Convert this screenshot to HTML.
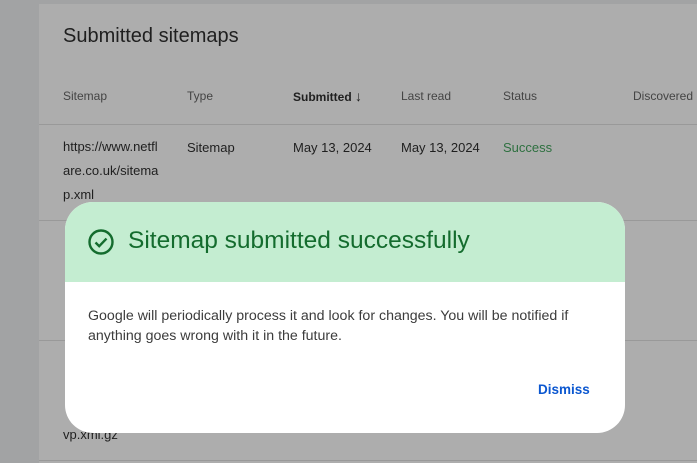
<!DOCTYPE html>
<html><head><style>
html,body{margin:0;width:697px;height:463px;overflow:hidden}
body{background:#a2a3a4;font-family:"Liberation Sans",sans-serif;position:relative}
.card{position:absolute;left:39px;top:4px;width:660px;height:459px;background:#adadad;}
.t{position:absolute;color:#1f1f1f;font-size:13px;white-space:nowrap}
.h{color:#444;font-size:12px}
.line{position:absolute;left:39px;width:660px;height:1px;background:#999}
.dlg{position:absolute;left:65px;top:202px;width:560px;height:231px;background:#fff;border-radius:28px;overflow:hidden}
.hd{height:80px;background:#c4edd1;position:relative}
</style></head><body>
<div class="card"></div>
<div class="t" style="left:63px;top:25px;font-size:20px;color:#1f1f1f">Submitted sitemaps</div>
<div class="t h" style="left:63px;top:89px">Sitemap</div>
<div class="t h" style="left:187px;top:89px">Type</div>
<div class="t h" style="left:293px;top:88px;color:#1f1f1f;font-weight:bold">Submitted <span style="font-weight:normal;font-size:14px">&#8595;</span></div>
<div class="t h" style="left:401px;top:89px">Last read</div>
<div class="t h" style="left:503px;top:89px">Status</div>
<div class="t h" style="left:633px;top:89px">Discovered</div>
<div class="line" style="top:124px"></div>
<div class="t" style="left:63px;top:135px;line-height:24px">https://www.netfl<br>are.co.uk/sitema<br>p.xml</div>
<div class="t" style="left:187px;top:140px">Sitemap</div>
<div class="t" style="left:293px;top:140px">May 13, 2024</div>
<div class="t" style="left:401px;top:140px">May 13, 2024</div>
<div class="t" style="left:503px;top:140px;color:#2e7040">Success</div>
<div class="line" style="top:220px"></div>
<div class="line" style="top:340px"></div>
<div class="t" style="left:63px;top:427px">vp.xml.gz</div>
<div class="line" style="top:460px"></div>
<div class="dlg">
<div class="hd">
<svg style="position:absolute;left:22px;top:26px" width="28" height="28" viewBox="0 0 28 28"><circle cx="14" cy="14" r="11.5" fill="none" stroke="#146c2e" stroke-width="2.4"/><path d="M8.5 14.5l3.7 3.7 7.3-7.6" fill="none" stroke="#146c2e" stroke-width="2.4"/></svg>
<div class="t" style="left:63px;top:25px;font-size:24.5px;color:#146c2e">Sitemap submitted successfully</div>
</div>
<div class="t" style="left:23px;top:104px;font-size:14.2px;color:#3c3c3c;line-height:20px">Google will periodically process it and look for changes. You will be notified if<br>anything goes wrong with it in the future.</div>
<div class="t" style="left:473px;top:180px;font-size:13.5px;color:#0b57d0;font-weight:bold">Dismiss</div>
</div>
</body></html>
